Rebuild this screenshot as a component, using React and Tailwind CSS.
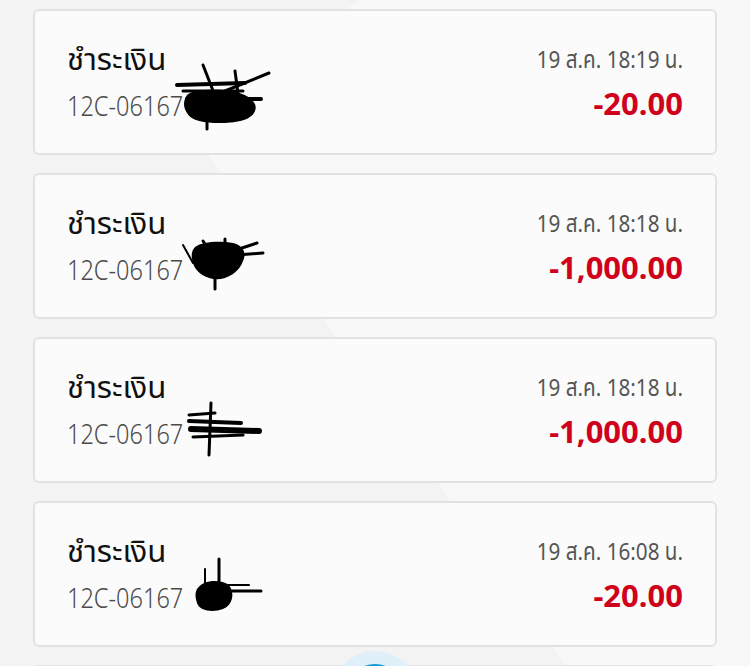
import React from 'react'

const rows = [
    { code: '12C-06167', date: '19 ส.ค. 18:19 น.', amount: '-20.00', mark: 0 },
    { code: '12C-06167', date: '19 ส.ค. 18:18 น.', amount: '-1,000.00', mark: 1 },
    { code: '12C-06167', date: '19 ส.ค. 18:18 น.', amount: '-1,000.00', mark: 2 },
    { code: '12C-06167', date: '19 ส.ค. 16:08 น.', amount: '-20.00', mark: 3 },
]

// hand-drawn black scribbles covering the rest of the reference number
function Scribble({ kind }) {
    if (kind === 0) {
        return (
            <svg width="100" height="72" viewBox="0 0 100 72" className="absolute left-[106px] top-[-20px]">
                <g stroke="#000" strokeLinecap="round" fill="none">
                    <path d="M30 4 L44 40" strokeWidth="3" />
                    <path d="M62 10 L66 40" strokeWidth="3" />
                    <path d="M52 30 L96 12" strokeWidth="3" />
                    <path d="M4 24 L72 22" strokeWidth="4" />
                    <path d="M10 30 L70 30" strokeWidth="3" />
                    <path d="M14 38 L88 38" strokeWidth="4" />
                    <path d="M34 50 L34 68" strokeWidth="3" />
                </g>
                <path d="M14 34 C20 28 44 28 58 30 C72 32 86 40 82 50 C78 60 62 62 46 62 C32 62 18 60 14 52 C10 46 10 40 14 34 Z" fill="#000" />
            </svg>
        )
    }
    if (kind === 1) {
        return (
            <svg width="90" height="60" viewBox="0 0 90 60" className="absolute left-[114px] top-[-12px]">
                <g stroke="#000" strokeLinecap="round" fill="none">
                    <path d="M2 12 L12 30" strokeWidth="2" />
                    <path d="M58 16 L76 10" strokeWidth="3" />
                    <path d="M56 22 L82 20" strokeWidth="3" />
                    <path d="M34 44 L34 56" strokeWidth="3" />
                    <path d="M22 8 L26 14" strokeWidth="3" />
                    <path d="M44 6 L44 12" strokeWidth="3" />
                </g>
                <path d="M14 14 C22 8 40 8 52 10 C62 12 66 20 62 28 C58 40 44 48 32 46 C22 44 14 38 12 30 C10 24 10 18 14 14 Z" fill="#000" />
            </svg>
        )
    }
    if (kind === 2) {
        return (
            <svg width="80" height="60" viewBox="0 0 80 60" className="absolute left-[118px] top-[-10px]">
                <g stroke="#000" strokeLinecap="round" fill="none">
                    <path d="M26 4 L24 56" strokeWidth="3" />
                    <path d="M4 16 L30 14" strokeWidth="3" />
                    <path d="M4 22 L56 24" strokeWidth="4" />
                    <path d="M6 30 L74 32" strokeWidth="6" />
                    <path d="M8 38 L58 36" strokeWidth="3" />
                </g>
            </svg>
        )
    }
    return (
        <svg width="80" height="62" viewBox="0 0 80 62" className="absolute left-[124px] top-[-16px]">
            <g stroke="#000" strokeLinecap="round" fill="none">
                <path d="M28 2 L28 30" strokeWidth="3" />
                <path d="M14 12 L14 30" strokeWidth="2" />
                <path d="M30 34 L70 34" strokeWidth="3" />
                <path d="M34 28 L58 28" strokeWidth="2" />
            </g>
            <path d="M6 32 C12 22 30 22 38 28 C44 36 42 48 32 52 C22 56 8 54 6 46 C4 40 4 36 6 32 Z" fill="#000" />
        </svg>
    )
}

export default function App() {
    return (
        <div className="relative w-[750px] h-[666px] overflow-hidden bg-[#f3f3f3]" style={{ fontFamily: '"Noto Sans", "Noto Sans Thai", sans-serif' }}>
            <div className="absolute -top-40 left-[380px] w-[700px] h-[900px] bg-[#f8f8f8] rotate-[-35deg]" />

            <div className="relative flex flex-col gap-[18px] pt-[9px] px-[33px]">
                {rows.concat([{ code: '', date: '', amount: '', mark: -1 }]).map((row, i) => (
                    <div key={i} className="flex justify-between h-[146px] rounded-md border-2 border-[#e2e2e2] bg-[#fbfbfb] px-[32px] pt-[26px]">
                        {row.mark >= 0 && (
                            <>
                                <div className="flex flex-col items-start">
                                    <span className="inline-block origin-left scale-x-[1.04] text-[30px] leading-[44px] text-[#111]">ชำระเงิน</span>
                                    <div className="relative">
                                        <span className="inline-block origin-left scale-x-[0.84] text-[28px] leading-[48px] font-light text-[#4a4a4a]">
                                            {row.code}
                                        </span>
                                        <Scribble kind={row.mark} />
                                    </div>
                                </div>
                                <div className="flex flex-col items-end">
                                    <span className="inline-block origin-right scale-x-[0.86] text-[24px] leading-[44px] text-[#555]">{row.date}</span>
                                    <span className="inline-block origin-right text-[31px] leading-[44px] font-bold text-[#d0021b]">{row.amount}</span>
                                </div>
                            </>
                        )}
                    </div>
                ))}
            </div>

            <div className="absolute left-[332px] top-[651px] w-[86px] h-[86px] rounded-full bg-[#dff0f8] flex items-center justify-center">
                <div className="w-[60px] h-[60px] rounded-full bg-[#1a9ad6]" />
            </div>
        </div>
    )
}
